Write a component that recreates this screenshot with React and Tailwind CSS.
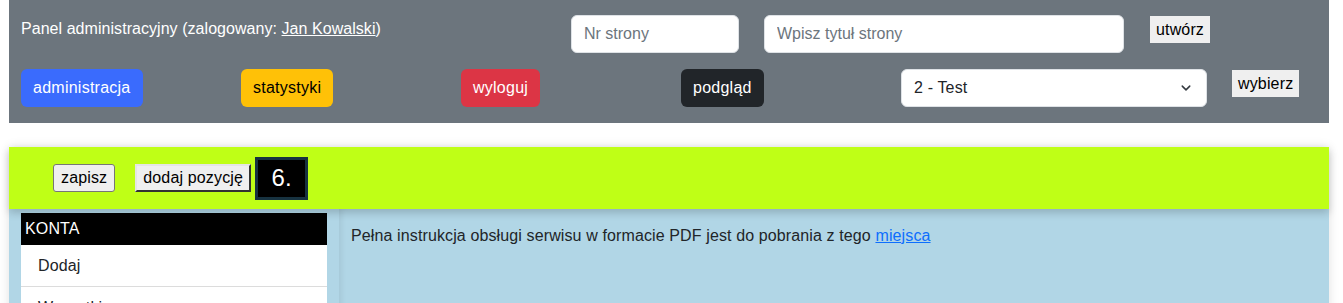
import React from 'react'

const font = { fontFamily: '"Liberation Sans", Arial, sans-serif' }

function NavBtn({ className, children }) {
  return (
    <button className={'h-[38px] rounded-md px-3 text-base leading-6 tracking-[0.25px] ' + className}>
      {children}
    </button>
  )
}

function Header() {
  return (
    <div className="mx-[9px] w-[1320px] bg-[#6c757d] pt-[15px] pb-4">
      <div className="flex h-[38px] items-start">
        <div className="ml-3 mt-0.5 w-[550px] text-base leading-6 tracking-[0.05px] text-white">
          Panel administracyjny (zalogowany: <a href="#" className="underline">Jan Kowalski</a>)
        </div>
        <input
          className="h-[38px] w-[168px] rounded-md border border-[#dee2e6] bg-white px-3 text-base text-[#212529] outline-none placeholder:text-[#6c757d]"
          placeholder="Nr strony"
        />
        <input
          className="ml-[25px] h-[38px] w-[360px] rounded-md border border-[#dee2e6] bg-white px-3 text-base text-[#212529] outline-none placeholder:text-[#6c757d]"
          placeholder="Wpisz tytuł strony"
        />
        <button className="ml-[26px] mt-px h-[27px] bg-[#efefef] px-[6px] text-base tracking-[0.15px] text-black">utwórz</button>
      </div>
      <div className="mt-4 flex h-[38px] items-start">
        <div className="w-[220px] pl-3">
          <NavBtn className="bg-[#3a6bfd] text-white">administracja</NavBtn>
        </div>
        <div className="w-[220px] pl-3">
          <NavBtn className="bg-[#ffc107] text-black">statystyki</NavBtn>
        </div>
        <div className="w-[220px] pl-3">
          <NavBtn className="bg-[#dc3545] text-white">wyloguj</NavBtn>
        </div>
        <div className="w-[220px] pl-3">
          <NavBtn className="bg-[#212529] text-white">podgląd</NavBtn>
        </div>
        <div className="w-[330px] px-3">
          <div className="flex h-[38px] w-full items-center justify-between rounded-md border border-[#dee2e6] bg-white pl-3 pr-[14px] text-base tracking-[0.15px] text-[#212529]">
            <span>2 - Test</span>
            <svg width="12" height="12" viewBox="0 0 16 16" fill="none" stroke="#343a40" strokeWidth="2" strokeLinecap="round" strokeLinejoin="round">
              <path d="M3 5.5l5 5 5-5" />
            </svg>
          </div>
        </div>
        <div className="w-[110px] pl-[13px]">
          <button className="mt-px h-[27px] bg-[#efefef] px-[6px] text-base tracking-[0.15px] text-black">wybierz</button>
        </div>
      </div>
    </div>
  )
}

function Toolbar() {
  return (
    <div className="relative z-10 flex h-[62px] items-center bg-[#bfff16] pl-[44px] tracking-[0.15px] shadow-[0_4px_8px_rgba(0,0,0,0.18)]">
      <button className="h-[28px] rounded-[3px] border border-[#767676] bg-[#efefef] px-[7px] text-base text-black">zapisz</button>
      <button className="ml-5 h-[28px] border-2 border-t-[#e5e5e5] border-l-[#e5e5e5] border-r-[#333] border-b-[#333] bg-[#efefef] px-[6px] text-base text-black">
        dodaj pozycję
      </button>
      <div className="ml-1 flex h-[43px] w-[53px] items-center justify-center border-[3px] border-[#173240] bg-black text-[24px] text-white">
        6.
      </div>
    </div>
  )
}

function Sidebar() {
  return (
    <div className="w-[330px] px-3 pt-1 tracking-[0.15px]">
      <div className="flex h-8 items-center bg-black px-1 text-base text-white">KONTA</div>
      <div className="flex h-[42px] items-center border-b border-[#dcdcdc] bg-white px-[17px] text-base text-[#212529]">Dodaj</div>
      <div className="flex h-[42px] items-center border-b border-[#dcdcdc] bg-white px-[17px] text-base text-[#212529]">Wszystkie</div>
      <div className="flex h-[42px] items-center border-b border-[#dcdcdc] bg-white px-[17px] text-base text-[#212529]">Szukaj</div>
    </div>
  )
}

export default function App() {
  return (
    <div className="min-h-[303px] bg-white" style={font}>
      <Header />
      <div className="mx-[9px] mt-6 w-[1320px] shadow-[0_0_10px_rgba(0,0,0,0.12)]">
        <Toolbar />
        <div className="flex min-h-[200px] bg-[#b1d6e6]">
          <Sidebar />
          <div className="flex-1 px-3 pt-[15px] text-base leading-6 tracking-[0.12px] text-[#212529] shadow-[inset_6px_0_6px_-4px_rgba(0,0,0,0.08)]">
            Pełna instrukcja obsługi serwisu w formacie PDF jest do pobrania z tego{' '}
            <a href="#" className="text-[#0d6efd] underline">miejsca</a>
          </div>
        </div>
      </div>
    </div>
  )
}
